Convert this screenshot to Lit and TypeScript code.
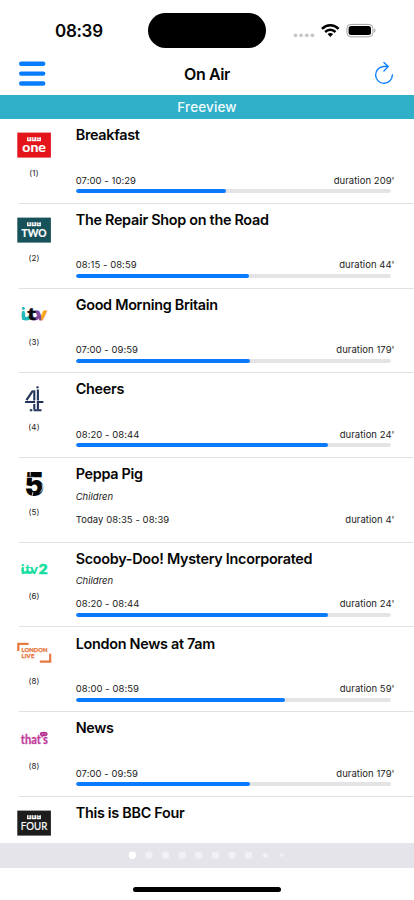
import { LitElement, html, css, svg, nothing } from "lit";
import { customElement, property } from "lit/decorators.js";

interface Programme {
  logo: string;
  channel: string;
  title: string;
  genre?: string;
  time?: string;
  duration?: string;
  progress?: number;
}

const programmes: Programme[] = [
  { logo: "one", channel: "(1)", title: "Breakfast", time: "07:00 - 10:29", duration: "duration 209'", progress: 47.6 },
  { logo: "two", channel: "(2)", title: "The Repair Shop on the Road", time: "08:15 - 08:59", duration: "duration 44'", progress: 55 },
  { logo: "itv", channel: "(3)", title: "Good Morning Britain", time: "07:00 - 09:59", duration: "duration 179'", progress: 55.3 },
  { logo: "four", channel: "(4)", title: "Cheers", time: "08:20 - 08:44", duration: "duration 24'", progress: 80 },
  { logo: "five", channel: "(5)", title: "Peppa Pig", genre: "Children", time: "Today 08:35 - 08:39", duration: "duration 4'" },
  { logo: "itv2", channel: "(6)", title: "Scooby-Doo! Mystery Incorporated", genre: "Children", time: "08:20 - 08:44", duration: "duration 24'", progress: 80 },
  { logo: "london", channel: "(8)", title: "London News at 7am", time: "08:00 - 08:59", duration: "duration 59'", progress: 66.3 },
  { logo: "thats", channel: "(8)", title: "News", time: "07:00 - 09:59", duration: "duration 179'", progress: 55.3 },
  { logo: "bbcfour", channel: "", title: "This is BBC Four" },
];

const bbc = (bg: string, name: string, size: number, width: number, y: number, weight: number) => svg`
  <rect x="0.3" y="5.6" width="33.6" height="25" fill=${bg}></rect>
  ${[10, 14.8, 19.6].map((x) => svg`<rect x=${x} y="10.2" width="4.3" height="4" fill="#fff"></rect>`)}
  ${["B", "B", "C"].map((c, i) => svg`<text x=${12.15 + i * 4.8} y="13.4" font-size="3.3" font-weight="600" text-anchor="middle" fill=${bg}>${c}</text>`)}
  <text x="17.1" y=${y} font-family="Lato" font-size=${size} font-weight=${weight} text-anchor="middle" textLength=${width} lengthAdjust="spacingAndGlyphs" fill="#fff" stroke="#fff" stroke-width="0.2">${name}</text>`;

const logos: Record<string, unknown> = {
  one: bbc("#e3151b", "one", 14, 23.5, 25.2, 700),
  two: bbc("#17525b", "TWO", 10.8, 25, 25.4, 700),
  bbcfour: bbc("#1d1d1d", "FOUR", 11, 26.5, 25, 400),
  itv: svg`
    <defs>
      <linearGradient id="vee" x1="0" x2="1" y1="0" y2="0">
        <stop offset="0.42" stop-color="#80479c"></stop>
        <stop offset="0.5" stop-color="#f6a51c"></stop>
      </linearGradient>
    </defs>
    <g font-family="Lato" font-weight="900" font-size="17">
      <text x="3.9" y="24.3" fill="#20b9bd">i</text>
      <path d="M6.4 16.5v3.6c0 3.6 5.2 3.6 6.4.3" fill="none" stroke="#20b9bd" stroke-width="3.5"></path>
      <text x="18.4" y="24.3" fill="url(#vee)" stroke="url(#vee)" stroke-width="0.8" textLength="11.3" lengthAdjust="spacingAndGlyphs">v</text>
      <path d="M14.6 20.3c.8 3.4 5.8 3.6 7-.4" fill="none" stroke="#80479c" stroke-width="3.3"></path>
      <text x="10.6" y="24.2" fill="#080b12" stroke="#080b12" stroke-width="0.6" textLength="8.2" lengthAdjust="spacingAndGlyphs">t</text>
    </g>`,
  itv2: svg`
    <g font-family="Lato" font-weight="900" fill="#16dda1">
      <text x="3.9" y="24" font-size="12.8">i</text>
      <text x="8.2" y="23.8" font-size="12.5">t</text>
      <text x="13" y="23.8" font-size="13" textLength="8" lengthAdjust="spacingAndGlyphs">v</text>
      <path d="M5.6 18v2.4c0 3 4 3 4.7.3M10.9 20.4c.4 3 4 3 4.5.4" fill="none" stroke="#16dda1" stroke-width="2.2"></path>
      <text x="21.7" y="23.9" font-size="14" textLength="8.8" lengthAdjust="spacingAndGlyphs" stroke="#16dda1" stroke-width="0.7">2</text>
    </g>`,
  four: svg`
    <g fill="none" stroke="#22345a" stroke-width="2.1">
      <path d="M15.9 9.6L9.5 19.2"></path>
      <path d="M17.3 9.2v10.4M20.9 8.6v11M19.5 6.7l2-.8"></path>
      <path d="M8.1 21h10M19.8 21h6.6"></path>
      <path d="M17.3 23v5.4M20.9 21v7.4"></path>
      <path d="M12.8 29.3h2.5M16.6 29.3h7.9"></path>
    </g>`,
  five: svg`
    <text x="7.6" y="30" font-family="Inter" font-weight="900" font-size="33" textLength="19.5" lengthAdjust="spacingAndGlyphs" fill="#050505">5</text>
    <path d="M13.2 5.5v4.8M8.5 11.4h8M14.8 31l1.2-5M24.9 18.5c1.2 2.8.5 6-1.9 8" stroke="#fff" stroke-width="0.8" fill="none"></path>`,
  london: svg`
    <g transform="translate(0 7.3)">
      <path d="M1.3 8.8V1.5h10.3M33.2 11.5v7.8H22.8" fill="none" stroke="#e8793f" stroke-width="2.2"></path>
      <g font-family="Lato" font-weight="900" font-size="6" fill="#e8743a" stroke="#e8743a" stroke-width="0.25">
        <text x="4.6" y="10.2" textLength="25.8" lengthAdjust="spacingAndGlyphs">LONDON</text>
        <text x="4.6" y="15.8" textLength="12.8" lengthAdjust="spacingAndGlyphs">LIVE</text>
      </g>
    </g>`,
  thats: svg`
    <g font-family="Lato" font-weight="700" font-size="13.4" fill="#c23c9c" stroke="#c23c9c" stroke-width="0.3">
      <text x="3.8" y="23.6" textLength="27.2" lengthAdjust="spacingAndGlyphs">that's</text>
    </g>
    <ellipse cx="26.7" cy="14" rx="3.9" ry="2.3" fill="#b62c8d"></ellipse>
    <circle cx="25.4" cy="13.9" r="0.6" fill="#eac0df"></circle>
    <circle cx="28" cy="13.9" r="0.6" fill="#eac0df"></circle>`,
};

@customElement("status-bar")
class StatusBar extends LitElement {
  static styles = css`
    :host { display: grid; grid-template-columns: 148px 118px 1fr; height: 56px; box-sizing: border-box; padding-top: 13px; }
    .time { padding-left: 55px; font-size: 17px; line-height: 36px; font-weight: 600; letter-spacing: -0.3px; }
    .island { height: 35px; border-radius: 18px; background: #000; }
    .signals { display: block; }
  `;
  render() {
    return html`
      <div class="time">08:39</div>
      <div class="island"></div>
      <svg class="signals" width="148" height="36" viewBox="266 13 148 36">
        <g fill="#c7c7c9">
          ${[295.5, 301.1, 306.8, 312.4].map((x) => svg`<circle cx=${x} cy="35.3" r="1.9"></circle>`)}
        </g>
        <g fill="none" stroke="#000" stroke-width="2.5">
          <path d="M322 28.8c4.8-4.7 11.8-4.7 16.6 0"></path>
          <path d="M325.1 32c3-2.9 7.4-2.9 10.4 0"></path>
        </g>
        <path d="M327.5 34.1c1.7-1.5 4-1.5 5.6 0l-2.8 2.8z"></path>
        <rect x="346.9" y="24.4" width="26" height="12.4" rx="4" fill="none" stroke="#a2a2a2"></rect>
        <rect x="348.6" y="26.1" width="22.4" height="9" rx="2.5"></rect>
        <path d="M374.2 28.6c1.6.4 1.6 3.7 0 4.1z" fill="#a2a2a2"></path>
      </svg>
    `;
  }
}

@customElement("nav-bar")
class NavBar extends LitElement {
  static styles = css`
    :host { display: grid; grid-template-columns: 60px 1fr 60px; height: 39px; }
    .title { text-align: center; font-size: 16px; line-height: 37px; font-weight: 600; letter-spacing: -0.4px; }
    .icon { display: block; }
  `;
  render() {
    return html`
      <svg class="icon" width="60" height="39" viewBox="0 56 60 39">
        <path d="M21.2 63.7h22M21.2 73.6h22M21.2 83.5h22" stroke="#087cff" stroke-width="4.4" stroke-linecap="round"></path>
      </svg>
      <div class="title">On Air</div>
      <svg class="icon" width="60" height="39" viewBox="354 56 60 39">
        <g fill="none" stroke="#087cff" stroke-width="1.35" stroke-linecap="round" stroke-linejoin="round">
          <path d="M388 66.5h-4a8.4 8.4 0 1 0 8.4 8.3"></path>
          <path d="M383.9 62.4l4.3 4.2-4.3 4.4"></path>
        </g>
      </svg>
    `;
  }
}

@customElement("programme-row")
class ProgrammeRow extends LitElement {
  @property({ attribute: false }) item!: Programme;
  static styles = css`
    :host { display: grid; grid-template-columns: 34px 1fr; column-gap: 24.7px; height: 84.7px; box-sizing: border-box; padding-left: 17px; }
    .channel { display: flex; flex-direction: column; padding-top: 8px; }
    .logo { display: block; width: 34px; height: 37px; overflow: visible; }
    .number { font-size: 8px; line-height: 12px; text-align: center; margin-top: 3px; color: #222; letter-spacing: 0.15px; }
    .body { display: flex; flex-direction: column; height: 84.9px; }
    .title { font-size: 14.4px; font-weight: 600; line-height: 20px; margin-top: 6.4px; white-space: nowrap; letter-spacing: -0.29px; }
    .genre { font-size: 9.5px; font-style: italic; line-height: 14px; height: 14px; margin-top: 5.4px; color: #222; letter-spacing: 0; }
    .times { display: flex; justify-content: space-between; margin: 9px 19.5px 0 0; font-size: 9.5px; line-height: 14px; color: #222; letter-spacing: 0.06px; white-space: nowrap; }
    .duration { letter-spacing: 0.04px; }
    .track { height: 4px; border-radius: 2px; background: #e4e4e6; margin: 1.6px 23px 0 0; overflow: hidden; }
    .fill { height: 100%; border-radius: 2px; background: #0a7aff; }
    .line { height: 1px; background: #e2e2e4; margin: auto 0 0 -57px; }
  `;
  render() {
    const p = this.item;
    return html`
      <div class="channel">
        <svg class="logo" viewBox="0 0 34 37" font-family="Inter, sans-serif">${logos[p.logo]}</svg>
        <div class="number">${p.channel}</div>
      </div>
      <div class="body">
        <div class="title">${p.title}</div>
        <div class="genre">${p.genre ?? nothing}</div>
        ${p.time ? html`<div class="times"><span>${p.time}</span><span class="duration">${p.duration}</span></div>` : nothing}
        ${p.progress ? html`<div class="track"><div class="fill" style="width:${p.progress}%"></div></div>` : nothing}
        <div class="line"></div>
      </div>
    `;
  }
}

@customElement("app-root")
class AppRoot extends LitElement {
  static styles = css`
    :host { display: flex; flex-direction: column; width: 414px; height: 900px; overflow: hidden; background: #fff; color: #050505; font-family: Inter, "Liberation Sans", sans-serif; }
    .group { height: 24px; flex: none; background: #30afc8; color: #effcff; text-align: center; font-size: 13.5px; line-height: 24px; font-weight: 500; letter-spacing: 0.15px; }
    .list { height: 724px; flex: none; overflow: hidden; }
    .pager { height: 25px; flex: none; display: flex; justify-content: center; background: #e5e4ea; }
    .dots { display: block; }
    .home { flex: 1; display: flex; justify-content: center; padding-top: 19px; }
    .handle { width: 148px; height: 5px; border-radius: 3px; background: #000; }
  `;
  render() {
    const sizes = [3.7, 3.7, 3.7, 3.7, 3.7, 3.7, 3.7, 3.7, 2.6, 1.7];
    return html`
      <status-bar></status-bar>
      <nav-bar></nav-bar>
      <div class="group">Freeview</div>
      <div class="list">${programmes.map((p) => html`<programme-row .item=${p}></programme-row>`)}</div>
      <div class="pager">
        <svg class="dots" width="166" height="25">
          ${sizes.map((r, i) => svg`<circle cx=${8.4 + i * 16.6} cy="12.3" r=${r} fill=${i ? "#f1f0f5" : "#fff"}></circle>`)}
        </svg>
      </div>
      <div class="home"><div class="handle"></div></div>
    `;
  }
}
